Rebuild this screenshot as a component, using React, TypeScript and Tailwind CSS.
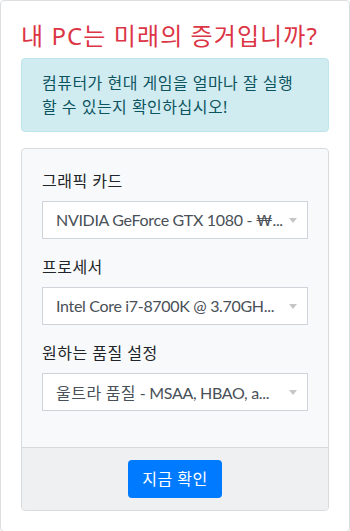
import { ReactNode } from "react";

const KO = "font-['Noto_Sans','Noto_Sans_CJK_KR',sans-serif]";

function Caret() {
  return (
    <svg width="8" height="5" viewBox="0 0 8 5" className="shrink-0">
      <path d="M0 0h8L4 5z" fill="#c4c6c8" />
    </svg>
  );
}

function FakeSelect({ children }: { children: ReactNode }) {
  return (
    <div className="flex h-[38px] items-center justify-between border border-[#ced4da] bg-white pl-[13px] pr-[10px] text-[16px] text-[#495057]">
      <span className="whitespace-nowrap tracking-[-0.02em] font-['Lato','Noto_Sans_CJK_KR',sans-serif]">{children}</span>
      <Caret />
    </div>
  );
}

function Field({ label, value }: { label: string; value: ReactNode }) {
  return (
    <div className="mb-4">
      <div className="mb-2 h-6 text-[16px] leading-6 tracking-[0.03em] text-[#212529]">{label}</div>
      <FakeSelect>{value}</FakeSelect>
    </div>
  );
}

export default function App() {
  return (
    <div className={`${KO} rounded border border-[#dcdfe2] bg-white p-5`}>
      {/* title */}
      <h2 className="mb-2 h-[29px] text-[24px] leading-[29px] font-normal tracking-[0.045em] text-[#dc3545]">
        내 PC는 미래의 증거입니까?
      </h2>

      {/* info alert */}
      <div className="mb-4 rounded border border-[#bee5eb] bg-[#d1ecf1] px-5 py-3 text-[16px] leading-6 tracking-[0.03em] text-[#0c5460]">
        <div className="h-6 whitespace-nowrap">컴퓨터가 현대 게임을 얼마나 잘 실행</div>
        <div className="h-6 whitespace-nowrap">할 수 있는지 확인하십시오!</div>
      </div>

      {/* form card */}
      <div className="overflow-hidden rounded border border-[#dadbdc] bg-[#f8f9fa]">
        <div className="px-5 pt-5 pb-5">
          <Field label="그래픽 카드" value="NVIDIA GeForce GTX 1080 - ₩..." />
          <Field label="프로세서" value="Intel Core i7-8700K @ 3.70GH..." />
          <Field
            label="원하는 품질 설정"
            value={
              <>
                <span className="font-['Noto_Sans_CJK_KR'] tracking-[0.03em]">울트라 품질</span> - MSAA, HBAO, a...
              </>
            }
          />
        </div>
        <div className="flex justify-center border-t border-[#d8d9da] bg-[#eff0f2] py-3">
          <button className="flex h-[38px] w-[94px] items-center justify-center rounded bg-[#007bff] text-[16px] tracking-[0.03em] text-white">
            지금 확인
          </button>
        </div>
      </div>
    </div>
  );
}
